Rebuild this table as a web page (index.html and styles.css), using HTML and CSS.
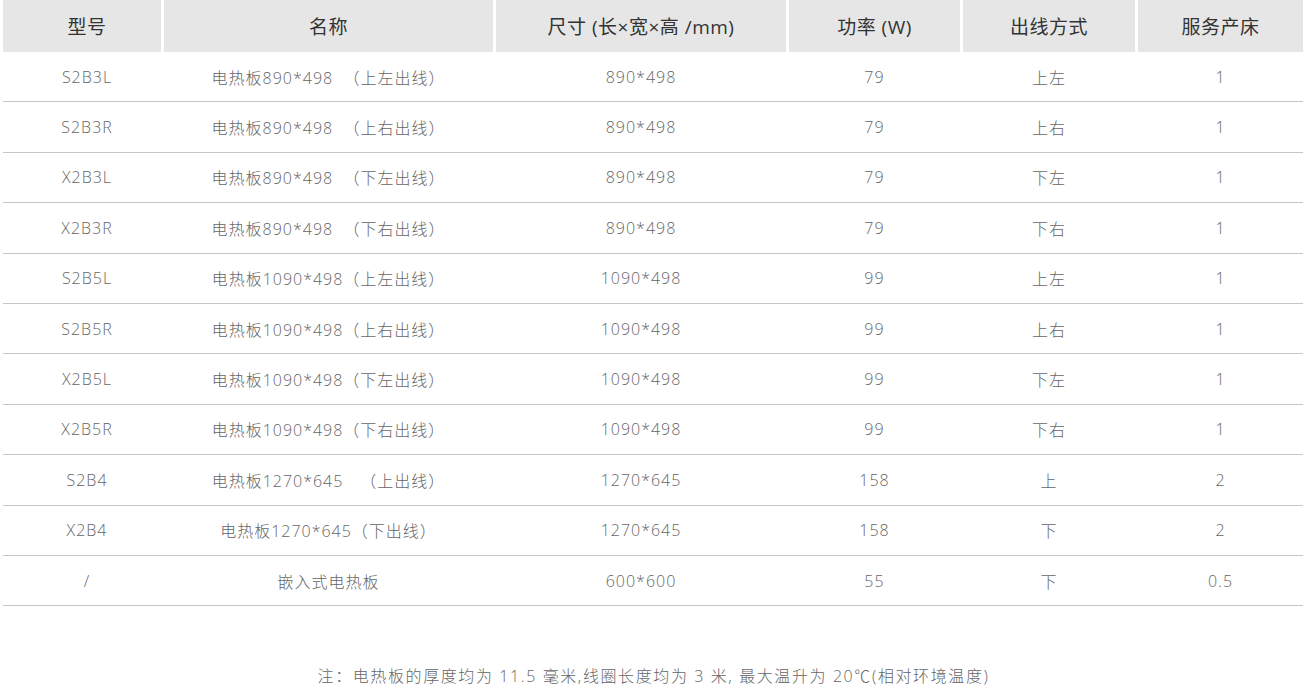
FILE: index.html
```html
<!DOCTYPE html>
<html lang="zh-CN">
<head>
<meta charset="utf-8">
<title>电热板参数</title>
<link rel="stylesheet" href="styles.css">
</head>
<body>
<div class="spec">
  <div class="row head">
    <div class="cell">型号</div>
    <div class="cell">名称</div>
    <div class="cell">尺寸 (长×宽×高 /mm)</div>
    <div class="cell">功率 (W)</div>
    <div class="cell">出线方式</div>
    <div class="cell">服务产床</div>
  </div>
  <div class="row"><div class="cell">S2B3L</div><div class="cell">电热板890*498&nbsp;&nbsp;（上左出线）</div><div class="cell">890*498</div><div class="cell">79</div><div class="cell">上左</div><div class="cell">1</div></div>
  <div class="row"><div class="cell">S2B3R</div><div class="cell">电热板890*498&nbsp;&nbsp;（上右出线）</div><div class="cell">890*498</div><div class="cell">79</div><div class="cell">上右</div><div class="cell">1</div></div>
  <div class="row"><div class="cell">X2B3L</div><div class="cell">电热板890*498&nbsp;&nbsp;（下左出线）</div><div class="cell">890*498</div><div class="cell">79</div><div class="cell">下左</div><div class="cell">1</div></div>
  <div class="row"><div class="cell">X2B3R</div><div class="cell">电热板890*498&nbsp;&nbsp;（下右出线）</div><div class="cell">890*498</div><div class="cell">79</div><div class="cell">下右</div><div class="cell">1</div></div>
  <div class="row"><div class="cell">S2B5L</div><div class="cell">电热板1090*498（上左出线）</div><div class="cell">1090*498</div><div class="cell">99</div><div class="cell">上左</div><div class="cell">1</div></div>
  <div class="row"><div class="cell">S2B5R</div><div class="cell">电热板1090*498（上右出线）</div><div class="cell">1090*498</div><div class="cell">99</div><div class="cell">上右</div><div class="cell">1</div></div>
  <div class="row"><div class="cell">X2B5L</div><div class="cell">电热板1090*498（下左出线）</div><div class="cell">1090*498</div><div class="cell">99</div><div class="cell">下左</div><div class="cell">1</div></div>
  <div class="row"><div class="cell">X2B5R</div><div class="cell">电热板1090*498（下右出线）</div><div class="cell">1090*498</div><div class="cell">99</div><div class="cell">下右</div><div class="cell">1</div></div>
  <div class="row"><div class="cell">S2B4</div><div class="cell">电热板1270*645&emsp;（上出线）</div><div class="cell">1270*645</div><div class="cell">158</div><div class="cell">上</div><div class="cell">2</div></div>
  <div class="row"><div class="cell">X2B4</div><div class="cell">电热板1270*645（下出线）</div><div class="cell">1270*645</div><div class="cell">158</div><div class="cell">下</div><div class="cell">2</div></div>
  <div class="row"><div class="cell">/</div><div class="cell">嵌入式电热板</div><div class="cell">600*600</div><div class="cell">55</div><div class="cell">下</div><div class="cell">0.5</div></div>
</div>
<p class="note">注：电热板的厚度均为 11.5 毫米,线圈长度均为 3 米, 最大温升为 20℃(相对环境温度)</p>
</body>
</html>
```
FILE: styles.css
```css
html, body {
  margin: 0;
  padding: 0;
  background: #ffffff;
}

body {
  font-family: "Open Sans", "Noto Sans CJK SC", sans-serif;
  color: #666666;
}

.spec {
  margin-left: 3px;
  width: 1300px;
}

.row {
  display: grid;
  grid-template-columns: 158px 329px 290px 171px 172px 165px;
  column-gap: 3px;
  height: 50.4px;
  box-sizing: border-box;
  border-bottom: 1px solid #c6c6c6;
  font-size: 16px;
  font-weight: 300;
  letter-spacing: 1px;
}

.cell {
  display: flex;
  align-items: center;
  justify-content: center;
  white-space: pre;
}

.cell:first-child {
  padding-left: 10px;
}

.row.head {
  height: 52px;
  border-bottom: none;
  font-size: 19px;
  font-weight: 400;
  color: #333333;
  letter-spacing: 0.5px;
}

.row.head .cell {
  background: #e6e6e6;
}

.note {
  margin: 58px 0 0 0;
  text-align: center;
  font-size: 16px;
  font-weight: 300;
  letter-spacing: 1.6px;
  line-height: 24px;
  color: #666666;
  padding-left: 1px;
}
```
